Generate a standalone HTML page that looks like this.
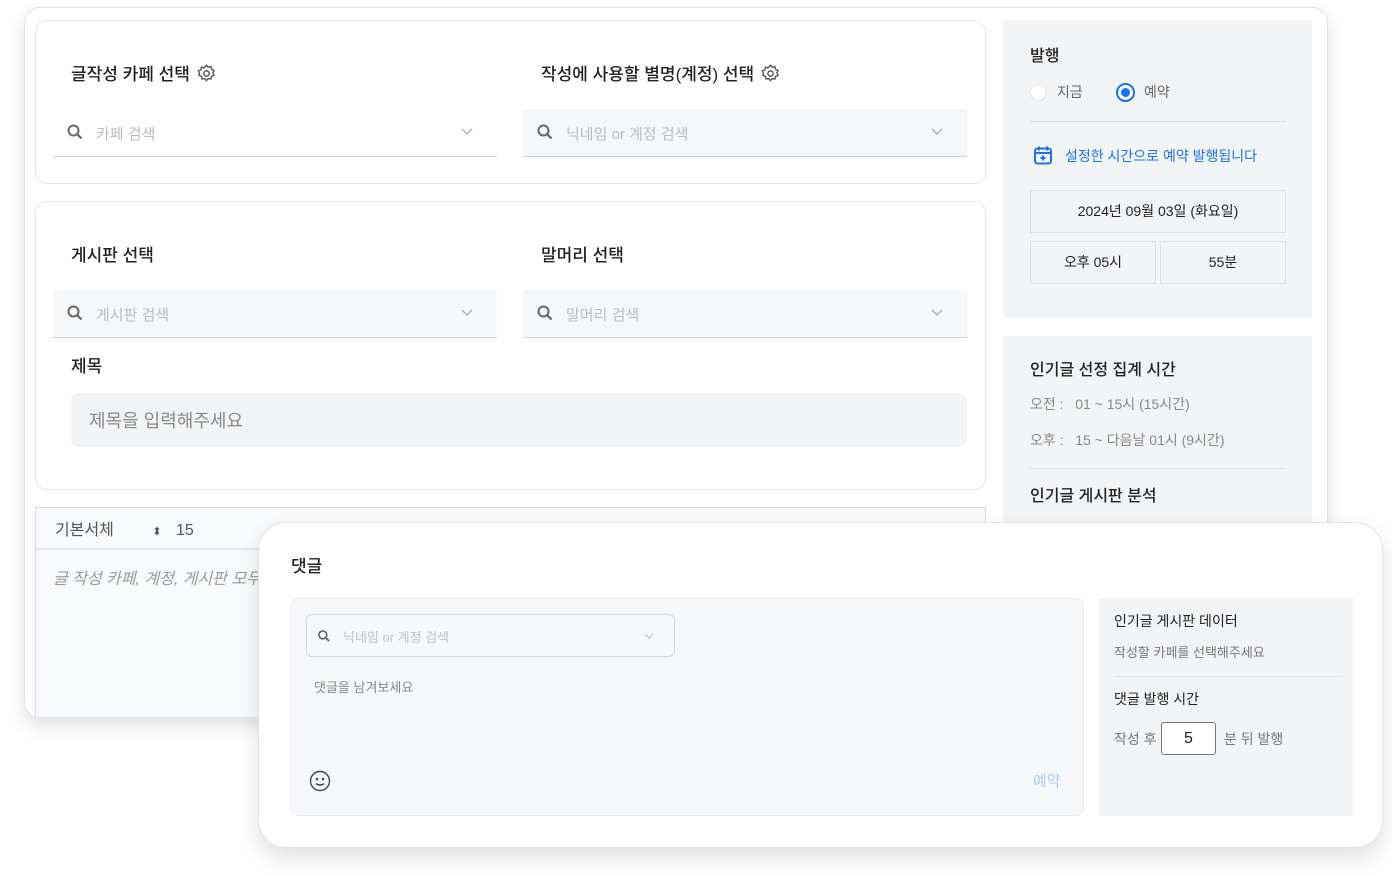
<!DOCTYPE html>
<html><head><meta charset="utf-8"><style>
*{box-sizing:border-box;margin:0;padding:0}
body{width:1392px;height:874px;background:#fff;position:relative;overflow:hidden;font-family:"Liberation Sans","Noto Sans CJK KR",sans-serif;color:#222}
.a{position:absolute}
.card{position:absolute;left:24px;top:7px;width:1304px;height:711px;background:#fff;border:1px solid #e3e4e8;border-radius:16px;box-shadow:0 8px 18px rgba(0,0,0,.12);overflow:hidden}
.box{position:absolute;background:#fff;border:1px solid #e6e7ea;border-radius:12px}
.t{font-size:17px;font-weight:500;color:#222}
.sel{position:absolute;height:48px;border-bottom:1px solid #d0d2d6;font-size:15px;color:#b8bbc0}
.sel .ic{position:absolute;left:13px;top:14px}
.sel .tx{position:absolute;left:43px;top:14px}
.sel .ch{position:absolute;right:24px;top:19px}
.gray{background:#f3f4f6;position:absolute}
.btn{position:absolute;border:1px solid #dfe1e5;background:#f3f4f6;font-size:14px;text-align:center;color:#222}
.gear{vertical-align:-4px;margin-left:6px}
</style></head><body>
<div class="card">
 <div class="box" style="left:10px;top:12px;width:951px;height:164px">
  <div class="a t" style="left:35px;top:39px">글작성 카페 선택<svg class="gear" width="21" height="21" viewBox="0 0 24 24" fill="none" stroke="#555" stroke-width="1.6"><circle cx="12" cy="12" r="3"/><path d="M12 2.5l2 2.3 3-.6.8 3 2.8 1.3-1.3 2.8 1.3 2.8-2.8 1.3-.8 3-3-.6-2 2.3-2-2.3-3 .6-.8-3-2.8-1.3L4 12 2.7 9.2l2.8-1.3.8-3 3 .6z"/></svg></div>
  <div class="a t" style="left:505px;top:39px">작성에 사용할 별명(계정) 선택<svg class="gear" width="21" height="21" viewBox="0 0 24 24" fill="none" stroke="#555" stroke-width="1.6"><circle cx="12" cy="12" r="3"/><path d="M12 2.5l2 2.3 3-.6.8 3 2.8 1.3-1.3 2.8 1.3 2.8-2.8 1.3-.8 3-3-.6-2 2.3-2-2.3-3 .6-.8-3-2.8-1.3L4 12 2.7 9.2l2.8-1.3.8-3 3 .6z"/></svg></div>
  <div class="sel" style="left:17px;top:88px;width:444px;background:#fff"><svg class="ic" width="18" height="18" viewBox="0 0 18 18"><circle cx="7.5" cy="7.5" r="5" fill="none" stroke="#666" stroke-width="2"/><path d="M11.5 11.5l4 4" stroke="#666" stroke-width="2.2"/></svg><span class="tx">카페 검색</span><svg class="ch" width="12" height="8" viewBox="0 0 12 8"><path d="M1 1l5 5 5-5" fill="none" stroke="#aaa" stroke-width="1.3"/></svg></div>
  <div class="sel" style="left:487px;top:88px;width:444px;background:#f6f7f9"><svg class="ic" width="18" height="18" viewBox="0 0 18 18"><circle cx="7.5" cy="7.5" r="5" fill="none" stroke="#666" stroke-width="2"/><path d="M11.5 11.5l4 4" stroke="#666" stroke-width="2.2"/></svg><span class="tx">닉네임 or 계정 검색</span><svg class="ch" width="12" height="8" viewBox="0 0 12 8"><path d="M1 1l5 5 5-5" fill="none" stroke="#aaa" stroke-width="1.3"/></svg></div>
 </div>
 <div class="box" style="left:10px;top:193px;width:951px;height:289px">
  <div class="a t" style="left:35px;top:39px">게시판 선택</div>
  <div class="a t" style="left:505px;top:39px">말머리 선택</div>
  <div class="sel" style="left:17px;top:88px;width:444px;background:#f6f7f9"><svg class="ic" width="18" height="18" viewBox="0 0 18 18"><circle cx="7.5" cy="7.5" r="5" fill="none" stroke="#666" stroke-width="2"/><path d="M11.5 11.5l4 4" stroke="#666" stroke-width="2.2"/></svg><span class="tx">게시판 검색</span><svg class="ch" width="12" height="8" viewBox="0 0 12 8"><path d="M1 1l5 5 5-5" fill="none" stroke="#aaa" stroke-width="1.3"/></svg></div>
  <div class="sel" style="left:487px;top:88px;width:444px;background:#f6f7f9"><svg class="ic" width="18" height="18" viewBox="0 0 18 18"><circle cx="7.5" cy="7.5" r="5" fill="none" stroke="#666" stroke-width="2"/><path d="M11.5 11.5l4 4" stroke="#666" stroke-width="2.2"/></svg><span class="tx">말머리 검색</span><svg class="ch" width="12" height="8" viewBox="0 0 12 8"><path d="M1 1l5 5 5-5" fill="none" stroke="#aaa" stroke-width="1.3"/></svg></div>
  <div class="a t" style="left:35px;top:150px">제목</div>
  <div class="a" style="left:35px;top:191px;width:896px;height:54px;background:#f3f4f6;border-radius:8px;font-size:18px;color:#888;padding:14px 18px">제목을 입력해주세요</div>
 </div>
 <div class="a" style="left:10px;top:499px;width:951px;height:240px;border:1px solid #d8dade;background:#f9fafb">
  <div style="height:42px;border-bottom:2px solid #e5e6ea;font-size:16px;color:#555;padding:8px 19px">기본서체 <span style="margin-left:34px;font-size:11px">⬍</span> <span style="margin-left:10px">15</span></div>
  <div style="font-size:16px;font-style:italic;color:#999;padding:15px 17px">글 작성 카페, 계정, 게시판 모두</div>
 </div>
 <div class="gray" style="left:978px;top:12px;width:309px;height:298px">
  <div class="a t" style="left:27px;top:22px;font-size:16px">발행</div>
  <div class="a" style="left:27px;top:64px;width:17px;height:17px;border-radius:50%;background:#fff;border:1px solid #e5e5e5"></div>
  <div class="a" style="left:54px;top:62px;font-size:14px;color:#666">지금</div>
  <div class="a" style="left:113px;top:63px;width:19px;height:19px;border-radius:50%;border:2px solid #1a73e8;background:#fff"><div style="margin:3px;width:9px;height:9px;border-radius:50%;background:#1a73e8"></div></div>
  <div class="a" style="left:141px;top:62px;font-size:14px;color:#666">예약</div>
  <div class="a" style="left:27px;top:101px;width:256px;height:1px;background:#dcdde0"></div>
  <svg class="a" style="left:30px;top:125px" width="20" height="20" viewBox="0 0 20 20" fill="none" stroke="#1a73e8" stroke-width="2"><rect x="2" y="3.5" width="16" height="15" rx="2.5"/><path d="M2 8h16M6 1.5v4M14 1.5v4M10 10.5v5M7.5 13h5"/></svg>
  <div class="a" style="left:62px;top:126px;font-size:14px;color:#1a73e8">설정한 시간으로 예약 발행됩니다</div>
  <div class="btn" style="left:27px;top:170px;width:256px;height:43px;line-height:40px">2024년 09월 03일 (화요일)</div>
  <div class="btn" style="left:27px;top:221px;width:126px;height:43px;line-height:40px">오후 05시</div>
  <div class="btn" style="left:157px;top:221px;width:126px;height:43px;line-height:40px">55분</div>
 </div>
 <div class="gray" style="left:978px;top:328px;width:309px;height:400px">
  <div class="a t" style="left:27px;top:20px;font-size:16px">인기글 선정 집계 시간</div>
  <div class="a" style="left:27px;top:58px;font-size:14px;color:#888">오전 :&nbsp;&nbsp; 01 ~ 15시 (15시간)</div>
  <div class="a" style="left:27px;top:94px;font-size:14px;color:#888">오후 :&nbsp;&nbsp; 15 ~ 다음날 01시 (9시간)</div>
  <div class="a" style="left:27px;top:132px;width:256px;height:1px;background:#e2e3e6"></div>
  <div class="a t" style="left:27px;top:146px;font-size:16px">인기글 게시판 분석</div>
 </div>
</div>

<div class="a" style="left:258px;top:522px;width:1125px;height:326px;background:#fff;border:1px solid #e3e4e8;border-radius:28px;box-shadow:0 10px 22px rgba(0,0,0,.12)">
 <div class="a t" style="left:32px;top:29px;font-size:17px">댓글</div>
 <div class="a" style="left:32px;top:75px;width:793px;height:218px;background:#f7f8fa;border:1px solid #ececef;border-radius:8px">
  <div class="a" style="left:14px;top:15px;width:369px;height:43px;border:1px solid #d4d6da;border-radius:6px;background:#f7f8fa;font-size:13px;color:#c0c2c6">
   <svg class="a" style="left:10px;top:14px" width="14" height="14" viewBox="0 0 18 18"><circle cx="7.5" cy="7.5" r="5" fill="none" stroke="#666" stroke-width="2.2"/><path d="M11.5 11.5l4 4" stroke="#666" stroke-width="2.4"/></svg>
   <span class="a" style="left:36px;top:12px">닉네임 or 계정 검색</span>
   <svg class="a" style="right:20px;top:18px" width="10" height="7" viewBox="0 0 12 8"><path d="M1 1l5 5 5-5" fill="none" stroke="#bbb" stroke-width="1.3"/></svg>
  </div>
  <div class="a" style="left:22px;top:78px;font-size:13px;color:#888">댓글을 남겨보세요</div>
  <svg class="a" style="left:17px;top:171px" width="22" height="22" viewBox="0 0 22 22" fill="none" stroke="#444" stroke-width="1.4"><circle cx="11" cy="11" r="9.5"/><circle cx="8" cy="9" r=".6" fill="#444"/><circle cx="14" cy="9" r=".6" fill="#444"/><path d="M7 13.5c2 2 6 2 8 0"/></svg>
  <div class="a" style="left:741px;top:171px;font-size:15px;color:#a9c9f5">예약</div>
 </div>
 <div class="gray" style="left:840px;top:75px;width:254px;height:218px">
  <div class="a" style="left:15px;top:13px;font-size:14px;color:#222">인기글 게시판 데이터</div>
  <div class="a" style="left:15px;top:44px;font-size:13px;color:#777">작성할 카페를 선택해주세요</div>
  <div class="a" style="left:15px;top:78px;width:229px;height:1px;background:#e2e3e6"></div>
  <div class="a" style="left:15px;top:91px;font-size:14px;color:#222">댓글 발행 시간</div>
  <div class="a" style="left:15px;top:131px;font-size:14px;color:#777">작성 후</div>
  <div class="a" style="left:62px;top:124px;width:55px;height:33px;border:1px solid #777;border-radius:3px;background:#fff;text-align:center;font-size:16px;line-height:31px">5</div>
  <div class="a" style="left:125px;top:131px;font-size:14px;color:#777">분 뒤 발행</div>
 </div>
</div>
</body></html>
